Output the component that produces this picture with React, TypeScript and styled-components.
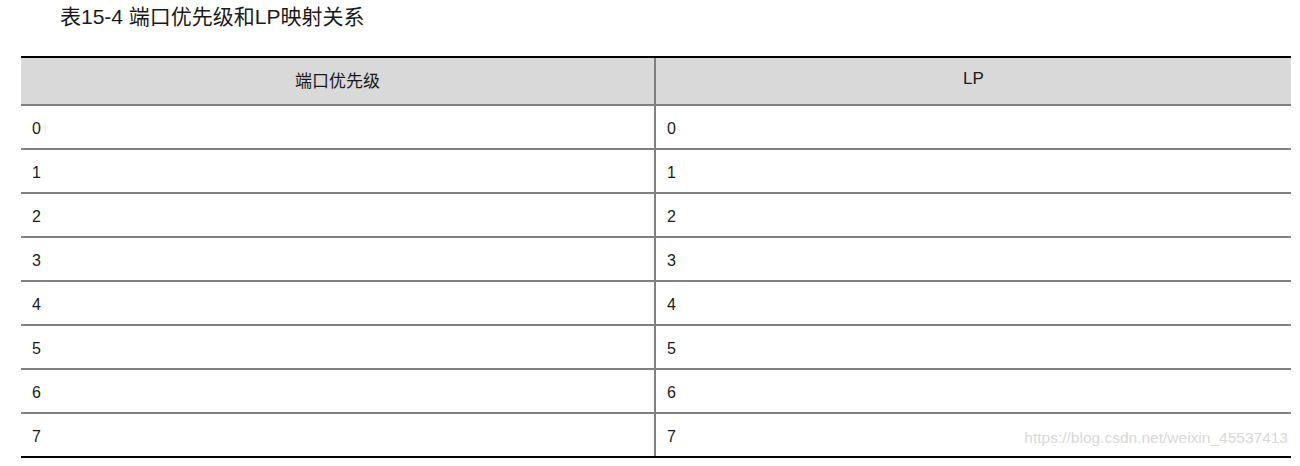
import * as React from 'react'
import styled, { createGlobalStyle } from 'styled-components'

const GlobalStyle = createGlobalStyle`
  body {
    margin: 0;
    background: #fff;
    font-family: "Liberation Sans", "Noto Sans CJK SC", sans-serif;
    color: #1a1a1a;
  }
`

const Page = styled.div`
  width: 1270px;
  padding: 0 9px 0 21px;
  position: relative;
`

const Caption = styled.div`
  height: 56px;
  padding: 5px 0 0 39px;
  box-sizing: border-box;
  font-size: 21px;
  line-height: 24px;
`

const Table = styled.div`
  display: grid;
  grid-template-columns: 1fr 1fr;
  border-top: 2px solid #000;
  border-bottom: 2px solid #000;
`

// header: 46px tall, body rows: 42px tall, text sits a little off-centre in both
const Cell = styled.div<{ $head?: boolean; $left?: boolean; $last?: boolean }>`
  height: ${p => (p.$head ? 42 : 38)}px;
  box-sizing: content-box;
  display: flex;
  align-items: center;
  justify-content: ${p => (p.$head ? 'center' : 'flex-start')};
  padding: ${p => (p.$head ? '0 0 4px 0' : '4px 0 0 11px')};
  background: ${p => (p.$head ? '#d9d9d9' : '#fff')};
  border-bottom: ${p => (p.$last ? 'none' : '2px solid #808080')};
  border-right: ${p => (p.$left ? '2px solid #808080' : 'none')};
  font-size: ${p => (p.$head ? 17 : 16)}px;
`

const Watermark = styled.div`
  position: absolute;
  right: 12px;
  bottom: 11px;
  font-size: 15.5px;
  color: #d8d8d8;
`

const rows = ['0', '1', '2', '3', '4', '5', '6', '7']

export default function App() {
  return (
    <Page>
      <GlobalStyle />
      <Caption>表15-4 端口优先级和LP映射关系</Caption>
      <Table>
        <Cell $head $left>端口优先级</Cell>
        <Cell $head>LP</Cell>
        {rows.map((r, i) => (
          <React.Fragment key={r}>
            <Cell $left $last={i === rows.length - 1}>{r}</Cell>
            <Cell $last={i === rows.length - 1}>{r}</Cell>
          </React.Fragment>
        ))}
      </Table>
      <Watermark>https://blog.csdn.net/weixin_45537413</Watermark>
    </Page>
  )
}
